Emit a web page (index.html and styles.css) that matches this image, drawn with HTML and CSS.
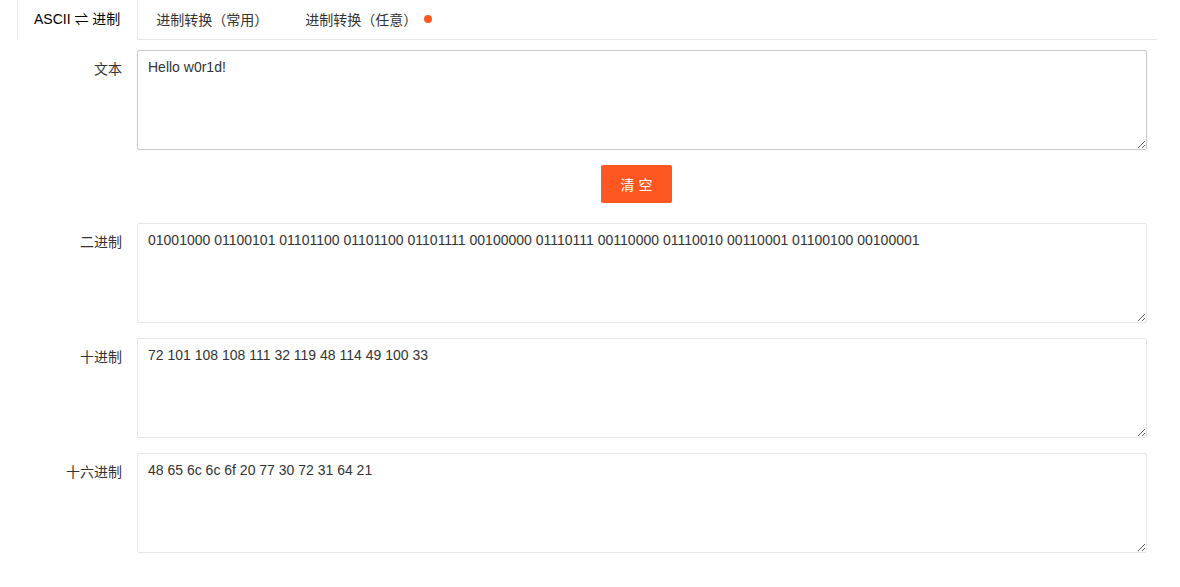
FILE: index.html
```html
<!DOCTYPE html>
<html lang="zh-CN">
<head>
  <meta charset="UTF-8">
  <title>ASCII 进制转换</title>
  <meta name="viewport" content="width=device-width, initial-scale=1.0" />
  <link rel="stylesheet" href="styles.css">
</head>
<body>
  <div class="tab">
    <ul class="tab-title">
      <li class="this">ASCII ⇌ 进制</li>
      <li>进制转换（常用）</li>
      <li class="last">进制转换（任意）<span class="badge-dot"></span></li>
    </ul>

    <div class="tab-content">
      <div class="form-item">
        <label class="form-label" for="text">文本</label>
        <div class="input-block">
          <textarea id="text" class="textarea active">Hello w0r1d!</textarea>
        </div>
      </div>

      <div class="form-item btn-row">
        <div class="input-block center">
          <button class="btn" onclick="clearAll()">清 空</button>
        </div>
      </div>

      <div class="form-item">
        <label class="form-label" for="bin">二进制</label>
        <div class="input-block">
          <textarea id="bin" class="textarea">01001000 01100101 01101100 01101100 01101111 00100000 01110111 00110000 01110010 00110001 01100100 00100001</textarea>
        </div>
      </div>

      <div class="form-item">
        <label class="form-label" for="dec">十进制</label>
        <div class="input-block">
          <textarea id="dec" class="textarea">72 101 108 108 111 32 119 48 114 49 100 33</textarea>
        </div>
      </div>

      <div class="form-item">
        <label class="form-label" for="hex">十六进制</label>
        <div class="input-block">
          <textarea id="hex" class="textarea">48 65 6c 6c 6f 20 77 30 72 31 64 21</textarea>
        </div>
      </div>
    </div>
  </div>

  <script>
    function clearAll() {
      ['text', 'bin', 'dec', 'hex'].forEach(id => document.getElementById(id).value = '');
    }
  </script>
</body>
</html>
```

FILE: styles.css
```css
body { margin: 0; background: #fff; color: #333; font: 14px "Liberation Sans", Arial, "Noto Sans CJK SC", sans-serif; }
.tab { margin: 0 23px 0 17px; }
.tab-title { display: flex; margin: 0; padding: 0; list-style: none; height: 40px; border-bottom: 1px solid #e6e6e6; box-sizing: border-box; }
.tab-title li { padding: 0 18px; line-height: 39px; height: 40px; box-sizing: border-box; color: #333; white-space: nowrap; display: flex; align-items: center; }
.tab-title li.this { padding: 0 17px 0 16px; border-left: 1px solid #e6e6e6; border-right: 1px solid #e6e6e6; border-bottom: 1px solid #fff; background: #fff; color: #000; }
.tab-title li.last { padding-left: 19px; }
.badge-dot { display: inline-block; width: 8px; height: 8px; border-radius: 50%; background: #ff5722; margin-left: 7px; margin-top: -2px; }
.tab-content { padding: 10px 10px 0; }
.form-item { display: flex; margin-bottom: 15px; }
.form-label { width: 110px; box-sizing: border-box; padding: 9px 15px; line-height: 20px; text-align: right; color: #333; flex: none; }
.input-block { flex: 1; }
.input-block.center { text-align: center; padding-right: 11px; }
.btn-row { margin-left: 110px; margin-bottom: 20px; }
.btn { height: 38px; padding: 0 20px; border: none; border-radius: 2px; background: #ff5722; color: #fff; font: inherit; font-size: 14px; cursor: pointer; }
.textarea { display: block; width: 100%; height: 100px; box-sizing: border-box; padding: 6px 10px; border: 1px solid #e6e6e6; border-radius: 2px; font: inherit; font-size: 14px; line-height: 20px; color: #333; resize: vertical; outline: none; }
.textarea.active { border-color: #c9c9c9; }
```
